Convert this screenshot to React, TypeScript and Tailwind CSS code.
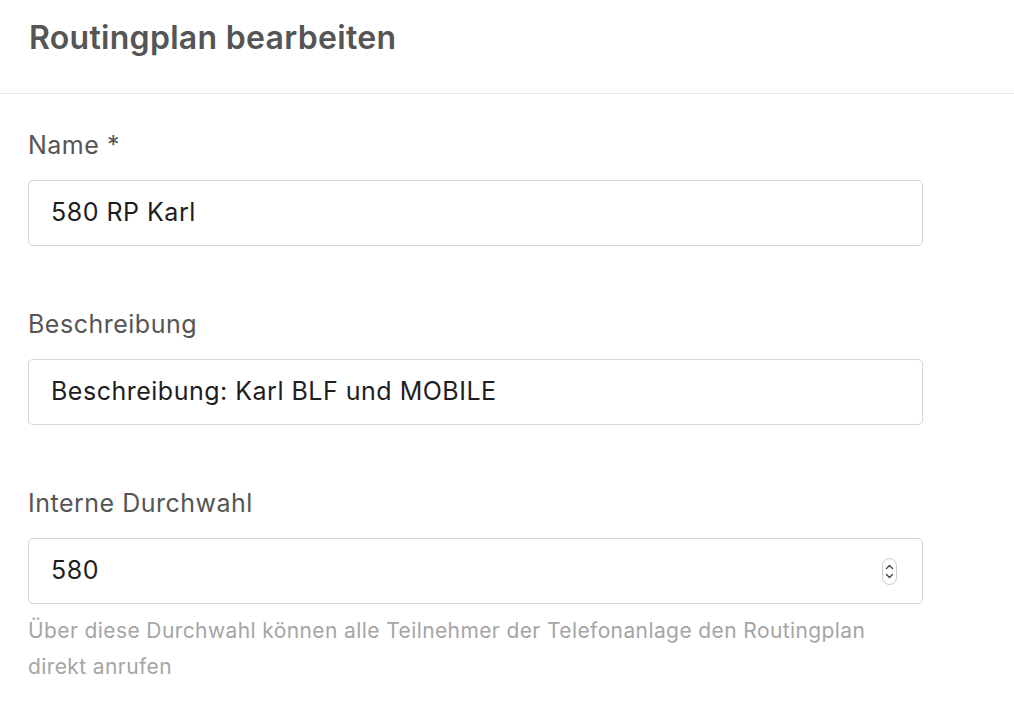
import React from 'react'

const font = { fontFamily: 'Inter, "Noto Sans", sans-serif' }

function Spinner() {
  return (
    <div className="w-[15px] h-[27px] rounded-full border border-[#cccccc] bg-white flex flex-col items-center justify-center gap-[3px]">
      <svg width="9" height="6" viewBox="0 0 9 6" fill="none"><path d="M1.5 4.5 4.5 1.5 7.5 4.5" stroke="#444" strokeWidth="1.4" strokeLinecap="round" strokeLinejoin="round" /></svg>
      <svg width="9" height="6" viewBox="0 0 9 6" fill="none"><path d="M1.5 1.5 4.5 4.5 7.5 1.5" stroke="#444" strokeWidth="1.4" strokeLinecap="round" strokeLinejoin="round" /></svg>
    </div>
  )
}

type FieldProps = { label: string; value: string; number?: boolean; help?: string; first?: boolean }
function Field({ label, value, number, help, first }: FieldProps) {
  return (
    <div className={first ? 'mt-[33px]' : 'mt-[60px]'}>
      <div className="text-[25px] tracking-[0.5px] leading-[36px] text-[#555555]">{label}</div>
      <div className="mt-[17px] w-[895px] h-[66px] border border-[#d5d5d5] rounded-[5px] flex items-center pl-[22px] pr-[25px]">
        <span className="flex-1 text-[25px] tracking-[0.5px] text-[#1e1e1e]">{value}</span>
        {number && <Spinner />}
      </div>
      {help && <p className="mt-[9px] w-[895px] text-[21px] tracking-[0.4px] leading-[36px] text-[#a5a5a5]">{help}</p>}
    </div>
  )
}

export default function App() {
  return (
    <div className="w-[1014px] h-[720px] bg-white overflow-hidden" style={font}>
      <div className="h-[94px] border-b border-[#e8e8e8] flex items-center pl-[29px] pb-[17px]">
        <h1 className="text-[32px] tracking-[0.3px] font-semibold text-[#555555]">Routingplan bearbeiten</h1>
      </div>
      <div className="pl-[28px]">
        <Field first label="Name *" value="580 RP Karl" />
        <Field label="Beschreibung" value="Beschreibung: Karl BLF und MOBILE" />
        <Field
          label="Interne Durchwahl"
          value="580"
          number
          help="Über diese Durchwahl können alle Teilnehmer der Telefonanlage den Routingplan direkt anrufen"
        />
      </div>
    </div>
  )
}
